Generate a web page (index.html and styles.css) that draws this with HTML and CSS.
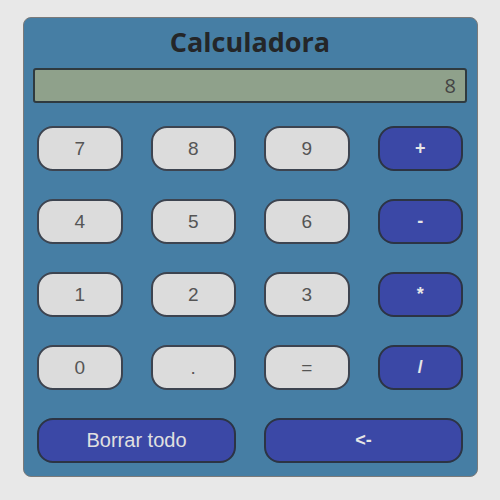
FILE: index.html
```html
<!DOCTYPE html>
<html>
<head>
<meta charset="utf-8">
<link rel="stylesheet" href="styles.css">
</head>
<body>
<div class="calc">
  <h1 class="title">Calculadora</h1>
  <div class="display">8</div>
  <div class="keys">
    <button class="key num">7</button>
    <button class="key num">8</button>
    <button class="key num">9</button>
    <button class="key op">+</button>
    <button class="key num">4</button>
    <button class="key num">5</button>
    <button class="key num">6</button>
    <button class="key op">-</button>
    <button class="key num">1</button>
    <button class="key num">2</button>
    <button class="key num">3</button>
    <button class="key op">*</button>
    <button class="key num">0</button>
    <button class="key num">.</button>
    <button class="key num">=</button>
    <button class="key op">/</button>
    <button class="key wide clear">Borrar todo</button>
    <button class="key wide op">&lt;-</button>
  </div>
</div>
</body>
</html>
```
FILE: styles.css
```css
html, body {
  margin: 0;
  padding: 0;
  background: #e8e8e8;
}
body {
  padding: 17px 22px 0 23px;
}
.calc {
  width: 455px;
  height: 460px;
  box-sizing: border-box;
  background: #467ea4;
  border: 1px solid #7a7a7a;
  border-radius: 8px;
  padding: 0 10px 0 9px;
}
.title {
  margin: 0;
  height: 50px;
  line-height: 47px;
  text-align: center;
  font-family: "Open Sans", sans-serif;
  font-weight: 700;
  font-size: 27px;
  color: #242628;
}
.display {
  height: 35px;
  box-sizing: border-box;
  background: #8fa18b;
  border: 2px solid #2f3a3f;
  border-radius: 3px;
  text-align: right;
  padding-right: 9px;
  font-family: "Open Sans", sans-serif;
  font-size: 20px;
  line-height: 31px;
  color: #444;
}
.keys {
  display: grid;
  grid-template-columns: repeat(4, 1fr);
  grid-auto-rows: 45px;
  column-gap: 28px;
  row-gap: 28px;
  margin: 23px 4px 0 4px;
}
.key {
  box-sizing: border-box;
  border: 2px solid #3d4450;
  border-radius: 16px;
  font-family: "Liberation Sans", Arial, sans-serif;
  font-size: 19px;
  padding: 0;
  cursor: pointer;
}
.num {
  background: #dcdcdc;
  color: #555;
}
.op {
  background: #3b48a6;
  border-color: #2c3444;
  color: #e6e6e6;
  font-weight: 700;
  font-size: 18px;
}
.clear {
  background: #3b48a6;
  border-color: #2c3444;
  color: #e0e0e0;
  font-size: 20px;
}
.wide {
  grid-column: span 2;
}
```
